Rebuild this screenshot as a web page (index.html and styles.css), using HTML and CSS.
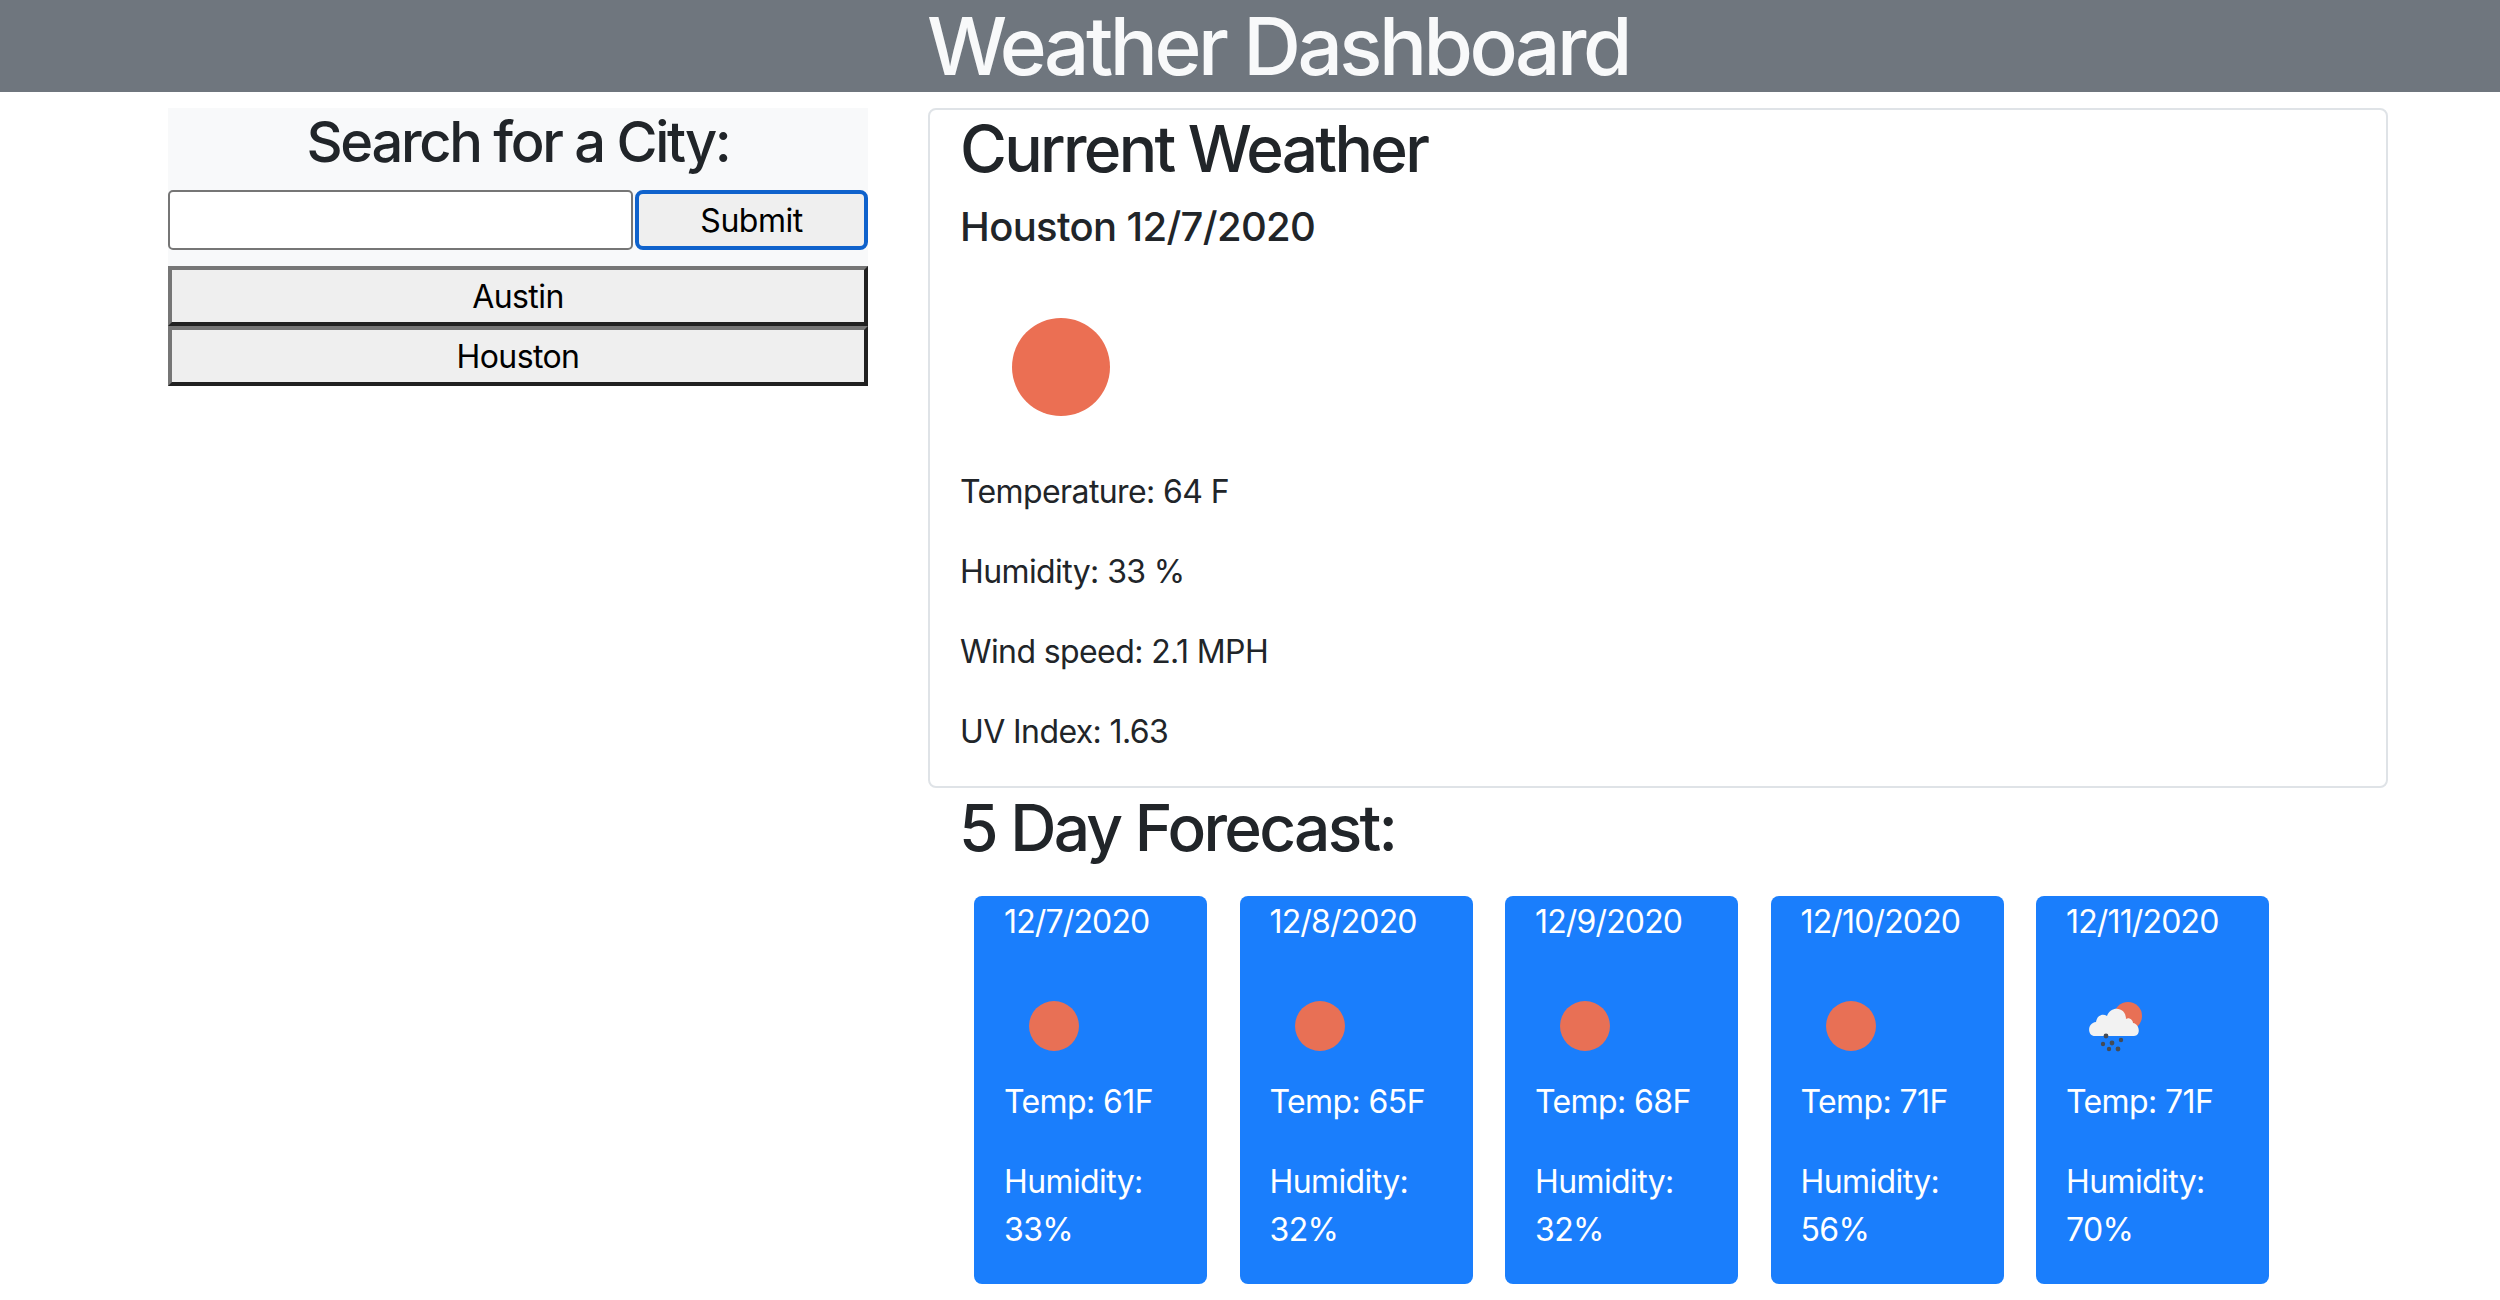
FILE: index.html
```html
<!DOCTYPE html>
<html lang="en">
<head>
<meta charset="utf-8">
<title>Weather Dashboard</title>
<link rel="stylesheet" href="styles.css">
</head>
<body>
<header class="topbar"><h1 class="title">Weather Dashboard</h1></header>
<main class="layout">
  <aside class="sidebar">
    <form class="search">
      <h3 class="search-title">Search for a City:</h3>
      <div class="search-row">
        <input class="search-input" type="text">
        <button class="submit" type="button">Submit</button>
      </div>
    </form>
    <button class="city" type="button">Austin</button>
    <button class="city" type="button">Houston</button>
  </aside>
  <section class="content">
    <div class="current">
      <h2 class="heading">Current Weather</h2>
      <h4 class="city-date">Houston 12/7/2020</h4>
      <svg class="icon-large" viewBox="0 0 200 200"><circle cx="101" cy="99" r="49" fill="#eb6f53"/></svg>
      <p>Temperature: 64 F</p>
      <p>Humidity: 33 %</p>
      <p>Wind speed: 2.1 MPH</p>
      <p>UV Index: 1.63</p>
    </div>
    <h2 class="heading forecast-heading">5 Day Forecast:</h2>
    <div class="forecast">
      <article class="day">
        <p class="date">12/7/2020</p>
        <svg class="icon-small" viewBox="0 0 100 100"><circle cx="50" cy="50" r="25" fill="#e87055"/></svg>
        <p>Temp: 61F</p>
        <p>Humidity: 33%</p>
      </article>
      <article class="day">
        <p class="date">12/8/2020</p>
        <svg class="icon-small" viewBox="0 0 100 100"><circle cx="50" cy="50" r="25" fill="#e87055"/></svg>
        <p>Temp: 65F</p>
        <p>Humidity: 32%</p>
      </article>
      <article class="day">
        <p class="date">12/9/2020</p>
        <svg class="icon-small" viewBox="0 0 100 100"><circle cx="50" cy="50" r="25" fill="#e87055"/></svg>
        <p>Temp: 68F</p>
        <p>Humidity: 32%</p>
      </article>
      <article class="day">
        <p class="date">12/10/2020</p>
        <svg class="icon-small" viewBox="0 0 100 100"><circle cx="50" cy="50" r="25" fill="#e87055"/></svg>
        <p>Temp: 71F</p>
        <p>Humidity: 56%</p>
      </article>
      <article class="day">
        <p class="date">12/11/2020</p>
        <svg class="icon-small" viewBox="0 0 100 100">
          <circle cx="62" cy="40" r="14" fill="#e87055"/>
          <path d="M29 60 C21 60 21 47 30 46 C31 39 37 37 41 40 C45 29 60 31 60 43 C63 41 67 44 67 47 C74 48 75 60 68 60 Z" fill="#f2f2f2"/>
          <g fill="#454b55">
            <circle cx="40" cy="60" r="2.4"/><circle cx="37" cy="68" r="2.2"/><circle cx="46" cy="67" r="2.4"/>
            <circle cx="55" cy="64" r="2.2"/><circle cx="43" cy="73" r="2.2"/><circle cx="52" cy="73" r="2.4"/>
          </g>
        </svg>
        <p>Temp: 71F</p>
        <p>Humidity: 70%</p>
      </article>
    </div>
  </section>
</main>
</body>
</html>
```
FILE: styles.css
```css
* { box-sizing: border-box; }
html, body { margin: 0; padding: 0; }
body {
  background: #fff;
  color: #212529;
  font-family: Inter, "Liberation Sans", sans-serif;
  font-size: 32px;
  line-height: 48px;
  letter-spacing: -0.6px;
}
p { margin: 0 0 32px; }
.topbar {
  height: 92px;
  padding-left: 56px;
  background: #6f767e;
  color: #f8f9fa;
  text-align: center;
}
.title {
  margin: 0;
  font-size: 80px;
  line-height: 92px;
  font-weight: 500;
  letter-spacing: -3.5px;
}
.layout {
  display: flex;
  gap: 60px;
  padding: 16px 112px 0 168px;
}
.sidebar { width: 700px; flex: none; }
.search { background: #f8f9fa; padding-bottom: 16px; }
.search-title {
  margin: 0 0 15px;
  padding-top: 1px;
  height: 67px;
  font-size: 56px;
  line-height: 67px;
  font-weight: 500;
  text-align: center;
  letter-spacing: -2.3px;
}
.search-row { display: flex; gap: 2px; height: 60px; }
.search-input {
  flex: 1;
  min-width: 0;
  height: 60px;
  background: #fff;
  border: 2px solid #767676;
  border-radius: 5px;
}
.submit {
  width: 233px;
  height: 60px;
  background: #efefef;
  border: 4px solid #0f62cc;
  border-radius: 8px;
  color: #000;
  font: 32px Inter, "Liberation Sans", sans-serif;
  letter-spacing: -0.5px;
  padding: 0;
}
.city {
  display: block;
  width: 100%;
  height: 60px;
  background: #efefef;
  border: 4px solid;
  border-color: #767676 #212121 #212121 #767676;
  color: #000;
  font: 32px Inter, "Liberation Sans", sans-serif;
  letter-spacing: -0.6px;
  padding: 0;
}
.content { width: 1460px; flex: none; }
.current {
  height: 680px;
  padding: 0 30px;
  border: 2px solid #dfe3e7;
  border-radius: 8px;
}
.heading {
  margin: 0 0 16px;
  font-size: 64px;
  line-height: 77px;
  font-weight: 500;
  letter-spacing: -2.7px;
}
.city-date {
  margin: 0 0 17px;
  font-size: 40px;
  line-height: 48px;
  font-weight: 500;
  letter-spacing: -0.65px;
}
.icon-large { display: block; width: 200px; height: 200px; }
.forecast-heading { margin: 1px 0 30px 31px; }
.forecast { display: flex; gap: 32.5px; padding-left: 46px; }
.day {
  width: 233px;
  height: 388px;
  padding: 1.5px 30px 0;
  background: #1a7efc;
  border-radius: 8px;
  color: #fff;
}
.date { letter-spacing: -0.85px; }
.icon-small {
  display: block;
  width: 100px;
  height: 100px;
  margin-top: -1.5px;
  margin-bottom: 1.5px;
  filter: blur(0.7px);
}
```
